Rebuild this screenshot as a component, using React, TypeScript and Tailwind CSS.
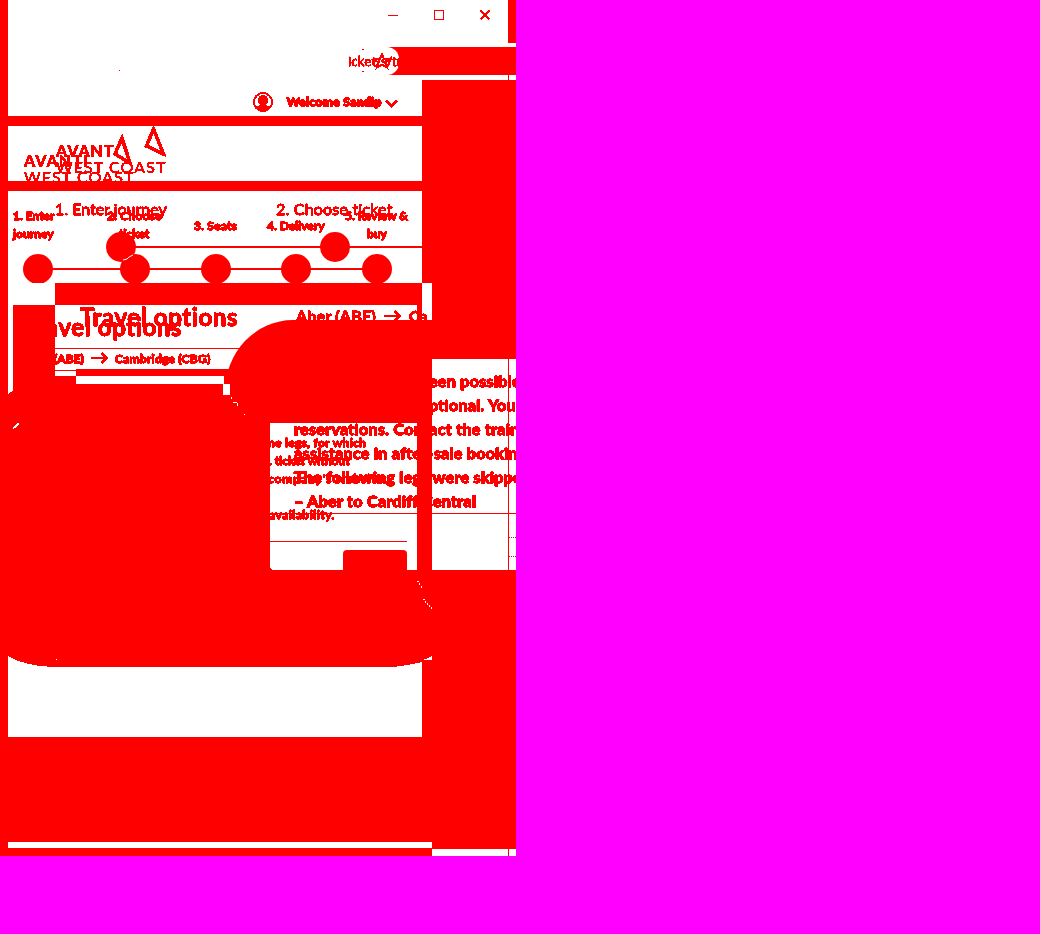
import React from "react";

const paragraphs = [
  { text: "een possible to", place: "left-[429px] top-[369px]" },
  { text: "ptional. You can", place: "left-[429px] top-[393px]" },
  { text: "reservations. Contact the train", place: "left-[294px] top-[417px]" },
  { text: "assistance in after-sale booking", place: "left-[294px] top-[441px]" },
  { text: "The following legs were skipped", place: "left-[294px] top-[465px]" },
  { text: "– Aber to Cardiff Central", place: "left-[294px] top-[489px]" },
];

const small = [
  { text: "1. Enter", place: "left-[13px] top-[207px]" },
  { text: "journey", place: "left-[13px] top-[225px]" },
  { text: "2. Choose", place: "left-[107px] top-[207px] tracking-[0.2px]" },
  { text: "ticket", place: "left-[119px] top-[225px]" },
  { text: "3. Seats", place: "left-[194px] top-[217px] tracking-[0.2px]" },
  { text: "4. Delivery", place: "left-[267px] top-[217px]" },
  { text: "5. Review &", place: "left-[345px] top-[207px]" },
  { text: "buy", place: "left-[367px] top-[225px]" },
  { text: "(ABE)", place: "left-[54px] top-[350px]" },
  { text: "Cambridge (CBG)", place: "left-[115px] top-[350px] tracking-[0.25px]" },
  { text: "ne legs, for which", place: "left-[268px] top-[434px] tracking-[0.3px]" },
  { text: ". ticket without", place: "left-[269px] top-[452px]" },
  { text: "company’s website.", place: "left-[268px] top-[470px] tracking-[0.9px]" },
  { text: "availability.", place: "left-[269px] top-[506px] tracking-[0.5px]" },
];

function Arrow({ className }: { className: string }) {
  return (
    <svg className={`absolute ${className}`} width="18" height="12" viewBox="0 0 18 12" fill="none" stroke="#f00" strokeWidth="2.6" shapeRendering="crispEdges">
      <path d="M0 6h16M10.500 1l5 5-5 5" />
    </svg>
  );
}

function Header() {
  return (
    <>
      <div className="flex h-[47px] justify-end">
        <div className="flex h-[30px] items-center gap-9 pr-[18px]">
          <svg width="10" height="10" shapeRendering="crispEdges"><path d="M0 5h10v1H0z" fill="#f00" /></svg>
          <svg width="10" height="10" shapeRendering="crispEdges"><path d="M.5.5h9v9h-9z" fill="none" stroke="#f00" /></svg>
          <svg width="10" height="10" shapeRendering="crispEdges"><path d="M.5.5l9 9M9.500.5l-9 9" stroke="#f00" strokeWidth="2.2" /></svg>
        </div>
        <div className="h-[43px] w-2 bg-[#f00]" />
      </div>
      <div className="flex h-7 justify-end">
        <div className="w-[129px] bg-[#f00]"><div className="h-7 w-3 rounded-r-[14px] bg-white" /></div>
      </div>
      <div className="flex h-[5px] justify-end"><div className="w-2 border-l border-[#f00]" /></div>
    </>
  );
}

function Stepper() {
  return (
    <div className="flex h-[203px]">
      <div className="flex w-[414px] flex-col">
        <div className="h-9" />
        <div className="h-2.5 bg-[#f00]" />
        <div className="h-[55px]" />
        <div className="h-2.5 bg-[#f00]" />
        <svg className="block" width="414" height="92" viewBox="8 191 414 92" fill="#f00">
          <path d="M121 246h301v2H121zM38 268h339v2H38z" />
          {[38, 135, 216, 296, 377].map((x) => <circle key={x} cx={x} cy="269" r="15" />)}
          <circle cx="121" cy="247" r="15" />
          <circle cx="335" cy="247" r="15" />
          <path d="M123 260l4-1 2-2 4-2" stroke="#fff" fill="none" />
        </svg>
      </div>
      <div className="flex-1 bg-[#f00]" />
    </div>
  );
}

function Options() {
  return (
    <>
      <div className="flex h-[22px]">
        <div className="w-[47px]" />
        <div className="w-[367px] bg-[#f00]" />
        <div className="w-2.5" />
        <div className="flex-1 bg-[#f00]" />
      </div>
      <div className="flex h-[118px]">
        <div className="w-[5px] pt-[91px]"><div className="h-[27px] bg-[#f00]" /></div>
        <div className="w-[42px] bg-[#f00]" />
        <div className="relative w-[377px] overflow-hidden">
          <div className="mt-[43px] h-px bg-[#f00]" />
          <div className="mt-[20px] flex h-[7px]">
            <div className="mt-px w-[21px] border-t border-[#f00]" />
            <div className="flex-1 bg-[#f00]" />
          </div>
          <div className="flex h-2"><div className="w-[21px] bg-[#f00]" /></div>
          <div className="flex h-[39px]">
            <div className="w-[168px] bg-[#f00]" />
            <div className="h-[11px] w-[7px]" />
            <div className="flex-1 bg-[#f00]" />
          </div>
          <div className="absolute left-[362px] top-0 h-4 w-[5px] bg-[#f00]" />
          <div className="absolute left-[170px] top-[15px] h-[103px] w-[220px] rounded-tl-[68px_72px] bg-[#f00]" />
          <div className="absolute left-[168px] top-[90px] h-7 w-9 bg-[#f00]" />
          <div className="absolute left-[168px] top-[79px] h-[11px] w-[7px] bg-white" />
          <div className="absolute left-[169px] top-[71px] h-2 w-2 bg-[#f00]" />
        </div>
        <div className="flex-1"><div className="h-[54px] bg-[#f00]" /><div className="ml-[76px] h-16 border-l border-[#f00]" /></div>
      </div>
      <div className="flex h-[147px]">
        <div className="w-[262px] bg-[#f00]" />
        <div className="w-[147px]">
          <div className="mt-[90px] h-px bg-[#f00]" />
          <div className="mt-[27px] h-px w-[137px] bg-[#f00]" />
          <div className="ml-[73px] mt-2 h-5 w-16 rounded-t bg-[#f00]" />
        </div>
        <div className="w-[15px] bg-[#f00]" />
        <div className="flex flex-1">
          <div className="w-[76px]"><div className="mt-[90px] h-px bg-[#f00]" /></div>
          <div className="flex-1 border-l border-[#f00]">
            <div className="mt-[90px] h-px bg-[#f00]" />
            <div className="mt-[23px] border-t border-dotted border-[#f00]" />
            <div className="mt-[18px] border-t border-dotted border-[#f00]" />
          </div>
        </div>
      </div>
    </>
  );
}

function Footer() {
  return (
    <>
      <div className="flex h-[167px]">
        <svg className="block" width="414" height="167" viewBox="8 570 414 167" fill="#f00" shapeRendering="crispEdges">
          <path d="M8 570H422V662C410 665 402 666 392 667H56C34 667 18 662 8 656Z" />
        </svg>
        <div className="flex-1 bg-[#f00]" />
      </div>
      <div className="h-[105px] bg-[#f00]" />
      <div className="flex h-[14px]">
        <div className="w-[424px]"><div className="h-1.5" /><div className="h-2 bg-[#f00]" /></div>
        <div className="flex-1"><div className="h-[7px] bg-[#f00]" /><div className="ml-[76px] h-[7px] border-l border-[#f00]" /></div>
      </div>
    </>
  );
}

export default function App() {
  return (
    <div className="h-[934px] w-[1040px] overflow-hidden bg-[#f0f]">
      <svg className="absolute" width="0" height="0">
        <filter id="hard" colorInterpolationFilters="sRGB">
          <feComponentTransfer><feFuncA type="linear" slope="20" intercept="-2.5" /></feComponentTransfer>
        </filter>
      </svg>
      <main className="relative flex h-[856px] w-[516px] overflow-hidden bg-white">
        <div className="w-2 bg-[#f00]" />
        <div className="w-[508px]"><Header /><Stepper /><Options /><Footer /></div>
        <div className="absolute inset-0 overflow-hidden whitespace-nowrap font-[Lato,sans-serif] text-[#f00] [font-variant-ligatures:none] [filter:url(#hard)]">
          <span className="absolute left-[348px] top-[52px] w-[53px] overflow-hidden font-['Open_Sans',sans-serif] text-[13px] leading-[18px] [-webkit-text-stroke:0.4px]">icket/s/tra</span>
          <span className="absolute left-[287px] top-[93px] text-[12px] font-black leading-[18px] tracking-[0.35px] [-webkit-text-stroke:0.9px]">Welcome Sandip</span>
          <span className="absolute left-[56px] top-[141px] text-[16px] font-black leading-5 tracking-[0.9px]">AVANT</span>
          <span className="absolute left-[56px] top-[157px] text-[16px] leading-5 tracking-[1.1px]">WEST COAST</span>
          <span className="absolute left-[24px] top-[151px] text-[16px] font-black leading-5 tracking-[1px]">AVANTI</span>
          <span className="absolute left-[24px] top-[167px] h-[15px] overflow-hidden text-[16px] leading-5 tracking-[1.1px]">WEST COAST</span>
          <span className="absolute left-[55px] top-[199px] text-[16px] leading-5 [-webkit-text-stroke:0.4px]">1. Enter journey</span>
          <span className="absolute left-[276px] top-[199px] text-[16px] leading-5 tracking-[0.2px] [-webkit-text-stroke:0.4px]">2. Choose ticket</span>
          <span className="absolute left-[80px] top-[302px] text-[24px] font-bold leading-[30px] tracking-[0.6px] [-webkit-text-stroke:0.5px]">Travel options</span>
          <span className="absolute left-[24px] top-[312px] text-[24px] font-bold leading-[30px] tracking-[0.6px] [-webkit-text-stroke:0.5px]">Travel options</span>
          <span className="absolute left-[296px] top-[306px] text-[16px] font-bold leading-5 tracking-[0.2px] [-webkit-text-stroke:0.4px]">Aber (ABE)</span>
          <span className="absolute left-[409px] top-[306px] text-[16px] font-bold leading-5 [-webkit-text-stroke:0.4px]">Ca</span>
          {small.map((item) => <span key={item.text} className={`absolute text-[12px] font-bold leading-[18px] [-webkit-text-stroke:0.7px] ${item.place}`}>{item.text}</span>)}
          {paragraphs.map((item) => <span key={item.text} className={`absolute text-[16px] font-bold leading-6 tracking-[0.32px] [-webkit-text-stroke:0.8px] ${item.place}`}>{item.text}</span>)}
        </div>
        <Arrow className="left-[91px] top-[352px]" />
        <Arrow className="left-[384px] top-[310px]" />
        <svg className="absolute left-0 top-0" width="516" height="856" fill="none" stroke="#f00" strokeWidth="2" shapeRendering="crispEdges">
          <path d="M122 138l-7 16 15 9ZM153.500 129l-7 17 17 8Z" strokeWidth="3.6" />
          <circle cx="263" cy="102" r="9" />
          <path d="M263 95a5 5 0 0 0-5 5c0 3 1 4 2 5-3 1-4 2-4 4 4 3 10 3 14 0 0-2-1-3-4-4 1-1 2-2 2-5a5 5 0 0 0-5-5Z" fill="#f00" stroke="none" />
          <path d="M386 100.500l5.500 5.500 5.500-5.500" strokeWidth="2.6" />
          <path d="M382 54l2 5 6 .5-4.500 3 1.500 5-5-3-5 3 1.500-5-4.500-3 6-.5Z" />
          <path d="M362 49.500h2M362 71.500h2M119 70.500h1" strokeWidth="1" />
          <path d="M8 396V394Q10 392 13 391V396Z" fill="#f00" stroke="none" />
          <path d="M13 429v-2l4-4h2v2l-4 3Z" fill="#fff" stroke="none" />
          <path d="M231.500 397v2M233 402.500h4M237.500 403v3M244 414.500h1M417 581.500h2M419.500 583v2M421 586v2M423 599.500h2M425.500 601v2M427.500 603v2M429 605v2M431.500 607v2M56 659.500h1" stroke="#fff" strokeWidth="1" />
          <path d="M270 566v4h4q-4 0-4-4Z" fill="#f00" stroke="none" />
          <path d="M422 660h10v-4q-4 3-10 4Z" fill="#fff" stroke="none" />
        </svg>
      </main>
    </div>
  );
}
